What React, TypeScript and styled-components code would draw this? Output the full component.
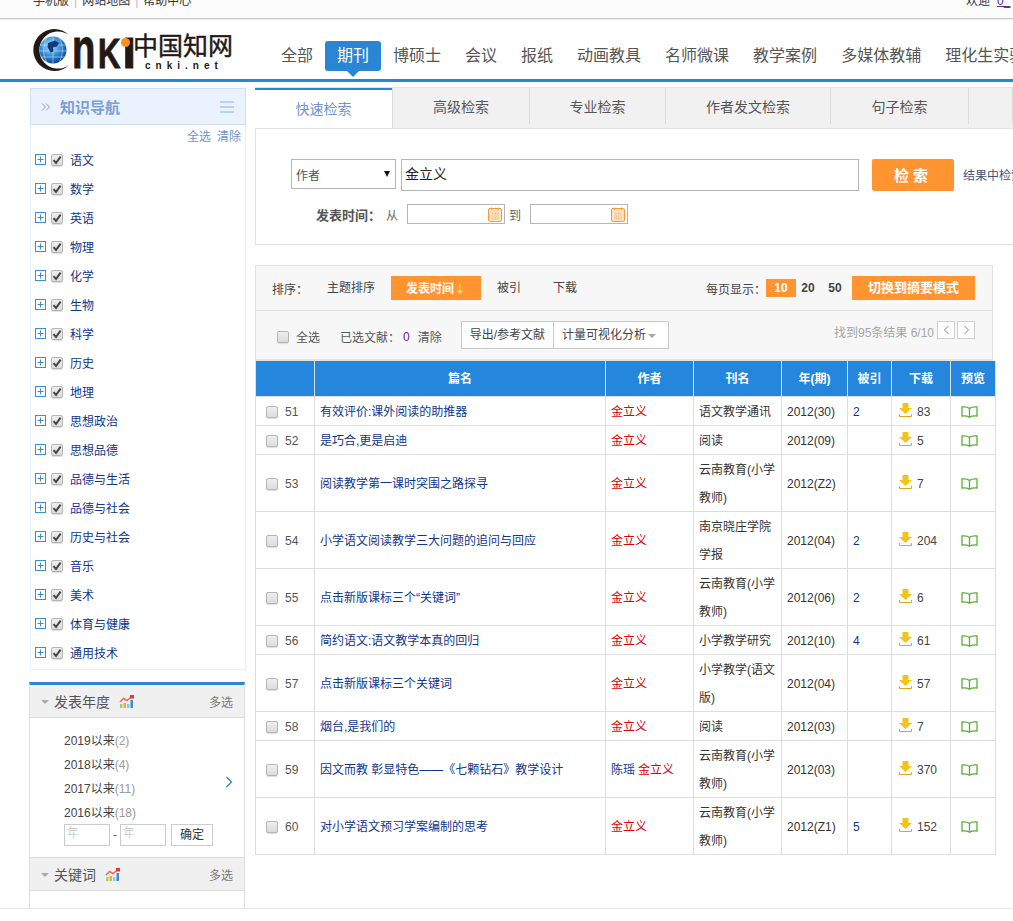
import React from "react";
import styled, { createGlobalStyle } from "styled-components";

const FONT = `"Liberation Sans", "Noto Sans CJK SC", sans-serif`;

const subjects = [
  "语文", "数学", "英语", "物理", "化学", "生物", "科学", "历史", "地理", "思想政治",
  "思想品德", "品德与生活", "品德与社会", "历史与社会", "音乐", "美术", "体育与健康", "通用技术",
];
const navItems = ["全部", "期刊", "博硕士", "会议", "报纸", "动画教具", "名师微课", "教学案例", "多媒体教辅", "理化生实验"];
const tabs = [
  { label: "快速检索", width: 138 },
  { label: "高级检索", width: 137 },
  { label: "专业检索", width: 136 },
  { label: "作者发文检索", width: 165 },
  { label: "句子检索", width: 138 },
  { label: "", width: 44 },
];
const years = [
  { y: "2019以来", n: "(2)" },
  { y: "2018以来", n: "(4)" },
  { y: "2017以来", n: "(11)" },
  { y: "2016以来", n: "(18)" },
];
const rows = [
  { no: 51, title: "有效评价:课外阅读的助推器", journal: "语文教学通讯", date: "2012(30)", cite: "2", dl: "83" },
  { no: 52, title: "是巧合,更是启迪", journal: "阅读", date: "2012(09)", cite: "", dl: "5" },
  { no: 53, title: "阅读教学第一课时突围之路探寻", journal: "云南教育(小学教师)", date: "2012(Z2)", cite: "", dl: "7" },
  { no: 54, title: "小学语文阅读教学三大问题的追问与回应", journal: "南京晓庄学院学报", date: "2012(04)", cite: "2", dl: "204" },
  { no: 55, title: "点击新版课标三个“关键词”", journal: "云南教育(小学教师)", date: "2012(06)", cite: "2", dl: "6" },
  { no: 56, title: "简约语文:语文教学本真的回归", journal: "小学教学研究", date: "2012(10)", cite: "4", dl: "61" },
  { no: 57, title: "点击新版课标三个关键词", journal: "小学教学(语文版)", date: "2012(04)", cite: "", dl: "57" },
  { no: 58, title: "烟台,是我们的", journal: "阅读", date: "2012(03)", cite: "", dl: "7" },
  { no: 59, title: "因文而教 彰显特色——《七颗钻石》教学设计", journal: "云南教育(小学教师)", date: "2012(03)", cite: "", dl: "370", co: "陈瑶" },
  { no: 60, title: "对小学语文预习学案编制的思考", journal: "云南教育(小学教师)", date: "2012(Z1)", cite: "5", dl: "152" },
];

const GlobalStyle = createGlobalStyle`
  html, body {
    margin: 0;
    padding: 0;
    background: #fff;
    overflow: hidden;
  }
  body {
    font-family: ${FONT};
    font-size: 12px;
    color: #333;
  }
`;

const Page = styled.div`
  width: 1013px;
  height: 921px;
  overflow: hidden;
`;

const TopBar = styled.div`
  height: 18px;
  background: #fcfcfc;
  border-bottom: 1px solid #c8c8c8;
  box-shadow: 0 1px 1px #eee;
  display: flex;
  justify-content: space-between;
  padding: 0 0 0 33px;
  overflow: hidden;
`;

const TopLinks = styled.div`
  margin-top: -8px;
  line-height: 18px;
  color: #333;
  display: flex;
  gap: 5px;
`;

const TopSep = styled.span`
  color: #bbb;
`;

const Welcome = styled.div`
  margin-top: -8px;
  line-height: 18px;
  width: 47px;
  white-space: nowrap;
  overflow: hidden;
  color: #333;
  em {
    font-style: normal;
    color: #5a2a86;
    margin-left: 7px;
    text-decoration: underline;
  }
`;

const Header = styled.header`
  height: 60px;
  border-bottom: 3px solid #2a85d4;
  display: flex;
  padding-left: 33px;
  overflow: hidden;
`;

const Logo = styled.div`
  position: relative;
  width: 200px;
  height: 46px;
  margin-top: 9px;
  margin-right: 36px;
  display: flex;
  flex: none;
`;

const LogoMark = styled.svg`
  width: 38px;
  height: 46px;
  flex: none;
`;

const LogoWord = styled.div`
  display: flex;
  align-items: baseline;
  width: 62px;
  flex: none;
  margin-top: 5px;
  padding-left: 1px;
  box-sizing: border-box;
  height: 36px;
`;

const LogoLetter = styled.span<{ $size: number; $scale: number; $w: number }>`
  display: block;
  flex: none;
  width: ${(p) => p.$w}px;
  font-family: "Liberation Sans", sans-serif;
  font-weight: 700;
  font-size: ${(p) => p.$size}px;
  line-height: 30px;
  color: #231815;
  -webkit-text-stroke: 1px #231815;
  transform: scaleX(${(p) => p.$scale});
  transform-origin: left center;
`;

const LogoDot = styled.span`
  position: absolute;
  left: 88px;
  top: 10px;
  width: 9px;
  height: 9px;
  border-radius: 50%;
  background: #f7941d;
`;

const LogoSide = styled.div`
  display: flex;
  flex-direction: column;
  align-items: flex-start;
`;

const LogoCn = styled.div`
  font-family: "Noto Sans CJK SC", sans-serif;
  font-weight: 400;
  font-size: 25px;
  line-height: 33px;
  color: #231815;
  -webkit-text-stroke: 0.4px #231815;
  white-space: nowrap;
`;

const LogoNet = styled.div`
  font-family: "Liberation Sans", sans-serif;
  font-size: 10px;
  line-height: 9px;
  letter-spacing: 5px;
  margin-left: 12px;
  color: #231815;
  font-weight: 700;
  white-space: nowrap;
`;

const Nav = styled.nav`
  display: flex;
  align-items: flex-start;
  margin-top: 22px;
  white-space: nowrap;
`;

const NavItem = styled.a<{ $active?: boolean }>`
  position: relative;
  height: 30px;
  line-height: 30px;
  padding: 0 12px;
  font-size: 16px;
  color: ${(p) => (p.$active ? "#fff" : "#555")};
  background: ${(p) => (p.$active ? "#2a85d4" : "transparent")};
  border-radius: 3px;
  &::after {
    content: "";
    display: ${(p) => (p.$active ? "block" : "none")};
    position: absolute;
    left: 50%;
    bottom: -6px;
    margin-left: -6px;
    border-left: 6px solid transparent;
    border-right: 6px solid transparent;
    border-top: 6px solid #2a85d4;
  }
`;

const Body = styled.div`
  display: flex;
  align-items: flex-start;
  padding: 6px 0 0 30px;
`;

const Sidebar = styled.aside`
  width: 216px;
  flex: none;
  margin-right: 9px;
`;

const NavPanel = styled.div`
  border: 1px solid #e8f0fa;
  border-top: none;
  height: 581px;
`;

const NavHead = styled.div`
  margin: 0 -1px;
  background: #eaf2fd;
  border: 1px solid #cfe0f5;
  box-sizing: border-box;
  height: 37px;
  display: flex;
  align-items: center;
  padding: 0 11px 0 10px;
`;

const NavTitle = styled.h2`
  margin: 0 0 0 9px;
  flex: 1;
  font-size: 15px;
  font-weight: 700;
  color: #7a9fd8;
`;

const SelectLinks = styled.div`
  display: flex;
  justify-content: flex-end;
  gap: 6px;
  padding: 5px 4px 0 0;
  line-height: 14px;
  color: #6f93c8;
`;

const SubjectList = styled.ul`
  list-style: none;
  margin: 1px 0 0;
  padding: 0;
`;

const SubjectRow = styled.li`
  height: 29px;
  display: flex;
  align-items: center;
  padding-left: 4px;
  color: #10358c;
`;

const PlusBox = styled.svg`
  width: 11px;
  height: 11px;
  margin-right: 5px;
  flex: none;
`;

const Check = styled.span`
  display: inline-flex;
  align-items: center;
  justify-content: center;
  flex: none;
  box-sizing: border-box;
  width: 12px;
  height: 12px;
  background: linear-gradient(#eee, #dcdcdc);
  border: 1px solid #b5b5b5;
  border-radius: 2px;
  box-shadow: 0 1px 1px #ddd;
`;

const SubjectName = styled.span`
  margin-left: 7px;
`;

const Facet = styled.section`
  margin: 12px 1px 0 -1px;
  border-top: 3px solid #2a85d4;
  border-left: 1px solid #ddd;
  border-right: 1px solid #ddd;
`;

const FacetHead = styled.div`
  height: 32px;
  background: #f0f0f0;
  border-bottom: 1px solid #ddd;
  display: flex;
  align-items: center;
  padding: 0 11px;
  color: #555;
  font-size: 14px;
`;

const FacetArrow = styled.span`
  width: 0;
  height: 0;
  border-left: 4px solid transparent;
  border-right: 4px solid transparent;
  border-top: 4px solid #aaa;
  margin-right: 5px;
  margin-top: 2px;
`;

const FacetTitle = styled.span`
  margin-right: 9px;
`;

const Spacer = styled.span`
  flex: 1;
`;

const Multi = styled.span`
  font-size: 12px;
  color: #777;
`;

const FacetBody = styled.div`
  height: 140px;
  box-sizing: border-box;
  padding: 11px 11px 0 34px;
  border-bottom: 1px solid #ddd;
  position: relative;
`;

const YearRow = styled.div`
  height: 24px;
  line-height: 24px;
  color: #444;
  span {
    color: #999;
  }
`;

const RangeRow = styled.div`
  display: flex;
  align-items: center;
  margin-top: -1px;
  color: #555;
`;

const YearInput = styled.div`
  width: 46px;
  height: 22px;
  box-sizing: border-box;
  border: 1px solid #ccc;
  color: #ccc;
  line-height: 16px;
  padding-left: 2px;
  background: #fff;
`;

const Dash = styled.span`
  width: 10px;
  text-align: center;
`;

const Confirm = styled.div`
  width: 42px;
  height: 22px;
  box-sizing: border-box;
  margin-left: 5px;
  border: 1px solid #ccc;
  text-align: center;
  line-height: 20px;
  color: #333;
`;

const NextYears = styled.svg`
  position: absolute;
  right: 11px;
  top: 58px;
  width: 8px;
  height: 12px;
`;

const KeywordBody = styled.div`
  height: 17px;
`;

const Main = styled.main`
  width: 758px;
  flex: none;
  margin-top: -1px;
`;

const TabBar = styled.div`
  display: flex;
  height: 42px;
  box-sizing: border-box;
  background: #f1f1f1;
  border-top: 1px solid #e2e2e2;
  border-bottom: 1px solid #e2e2e2;
`;

const Tab = styled.div<{ $active?: boolean; $w: number }>`
  flex: none;
  width: ${(p) => p.$w}px;
  box-sizing: border-box;
  text-align: center;
  font-size: 14px;
  color: ${(p) => (p.$active ? "#6f93d6" : "#555")};
  background: ${(p) => (p.$active ? "#fff" : "transparent")};
  border-right: 1px solid #ddd;
  line-height: ${(p) => (p.$active ? "42px" : "38px")};
  height: ${(p) => (p.$active ? "40px" : "36px")};
  box-shadow: ${(p) => (p.$active ? "inset 0 2px 0 #2a85d4" : "none")};
`;

const SearchPanel = styled.section`
  height: 116px;
  box-sizing: border-box;
  border-left: 1px solid #e2e2e2;
  border-bottom: 1px solid #e2e2e2;
  padding: 30px 0 0 35px;
  overflow: hidden;
`;

const SearchRow = styled.div`
  display: flex;
  align-items: flex-start;
  height: 32px;
  white-space: nowrap;
`;

const FieldSelect = styled.div`
  flex: none;
  width: 105px;
  height: 30px;
  box-sizing: border-box;
  border: 1px solid #b5b5b5;
  display: flex;
  align-items: center;
  justify-content: space-between;
  padding: 0 5px 0 4px;
  color: #555;
`;

const SelectCaret = styled.span`
  width: 0;
  height: 0;
  border-left: 3px solid transparent;
  border-right: 3px solid transparent;
  border-top: 6px solid #111;
`;

const Query = styled.div`
  flex: none;
  width: 458px;
  height: 32px;
  box-sizing: border-box;
  margin-left: 5px;
  border: 1px solid #b5b5b5;
  padding-left: 3px;
  line-height: 29px;
  font-size: 14px;
  color: #222;
`;

const SearchButton = styled.div`
  flex: none;
  width: 82px;
  height: 32px;
  margin-left: 13px;
  background: #ff9431;
  border-radius: 2px;
  color: #fff;
  font-weight: 700;
  font-size: 15px;
  text-align: center;
  line-height: 33px;
  letter-spacing: 4px;
`;

const InResult = styled.span`
  flex: none;
  margin-left: 9px;
  line-height: 34px;
  color: #44557a;
`;

const DateRow = styled.div`
  display: flex;
  align-items: center;
  margin: 13px 0 0 25px;
  height: 20px;
  color: #666;
`;

const DateLabel = styled.b`
  color: #555;
  font-size: 13px;
  margin-right: 5px;
`;

const DateWord = styled.span<{ $gap: number }>`
  margin-right: ${(p) => p.$gap}px;
`;

const DateInput = styled.div`
  width: 98px;
  height: 20px;
  box-sizing: border-box;
  border: 1px solid #b5b5b5;
  display: flex;
  justify-content: flex-end;
  align-items: center;
  padding-right: 2px;
  margin-right: 4px;
`;

const Calendar = styled.svg`
  width: 14px;
  height: 15px;
`;

const SortPanel = styled.section`
  margin-top: 20px;
  width: 738px;
  height: 96px;
  box-sizing: border-box;
  background: #f7f7f7;
  border: 1px solid #e2e2e2;
  border-bottom-width: 2px;
`;

const SortRow = styled.div`
  height: 45px;
  box-sizing: border-box;
  display: flex;
  align-items: center;
  border-bottom: 1px solid #e2e2e2;
  padding: 0 17px 0 16px;
  color: #444;
`;

const SortLabel = styled.span`
  margin-right: 19px;
`;

const SortItem = styled.span<{ $active?: boolean; $gap: number }>`
  flex: none;
  width: ${(p) => (p.$active ? "90px" : "auto")};
  height: 24px;
  line-height: 24px;
  text-align: center;
  margin-right: ${(p) => p.$gap}px;
  color: ${(p) => (p.$active ? "#fff" : "#444")};
  background: ${(p) => (p.$active ? "#ff9431" : "transparent")};
  font-weight: ${(p) => (p.$active ? 700 : 400)};
`;

const SortArrow = styled.span`
  display: inline-block;
  width: 12px;
  font-family: "Noto Sans CJK SC", sans-serif;
  font-weight: 400;
  color: #ffe6a8;
`;

const PageSize = styled.span<{ $active?: boolean }>`
  flex: none;
  width: ${(p) => (p.$active ? "30px" : "24px")};
  height: 18px;
  margin-right: ${(p) => (p.$active ? "0" : "3px")};
  text-align: center;
  line-height: 18px;
  font-weight: 700;
  color: ${(p) => (p.$active ? "#fff" : "#444")};
  background: ${(p) => (p.$active ? "#ff9431" : "transparent")};
`;

const ModeButton = styled.span`
  flex: none;
  width: 123px;
  height: 24px;
  margin-left: 2px;
  line-height: 24px;
  text-align: center;
  font-size: 13px;
  font-weight: 700;
  color: #fff;
  background: #ff9431;
`;

const ToolRow = styled.div`
  height: 48px;
  display: flex;
  align-items: center;
  padding: 0 17px 0 21px;
  color: #555;
`;

const ToolCheck = styled(Check)`
  margin-top: 4px;
`;

const ToolText = styled.span`
  margin-top: 3px;
  flex: none;
`;

const SelectAll = styled(ToolText)`
  margin-left: 7px;
  margin-right: 20px;
`;

const Zero = styled(ToolText)`
  color: #5a2a86;
  margin-left: 3px;
  margin-right: 8px;
`;

const ButtonGroup = styled.div`
  display: flex;
  flex: none;
  height: 28px;
  margin-left: 19px;
  box-sizing: border-box;
  border: 1px solid #c8c8c8;
  background: #fff;
  line-height: 26px;
  color: #444;
`;

const GroupButton = styled.span`
  padding: 0 8px;
  & + & {
    border-left: 1px solid #c8c8c8;
  }
`;

const GroupCaret = styled.i`
  display: inline-block;
  border-left: 4px solid transparent;
  border-right: 4px solid transparent;
  border-top: 4px solid #aaa;
  margin: 0 4px 0 2px;
  vertical-align: 1px;
`;

const Found = styled.span`
  color: #a5a5a5;
  margin-right: 3px;
  margin-top: -8px;
`;

const PageButton = styled.span`
  width: 18px;
  height: 18px;
  box-sizing: border-box;
  margin-top: -11px;
  border: 1px solid #d0d0d0;
  background: #fff;
  display: flex;
  align-items: center;
  justify-content: center;
  & + & {
    margin-left: 2px;
  }
`;

const Grid = styled.table`
  width: 740px;
  table-layout: fixed;
  border-collapse: collapse;
  line-height: 28px;
`;

const HeadCell = styled.th`
  height: 35px;
  padding: 0;
  background: #2486dc;
  color: #fff;
  font-size: 12px;
  text-align: center;
  border: 1px solid #d9e2ea;
  border-top: none;
`;

const Cell = styled.td`
  padding: 0 5px;
  border: 1px solid #ddd;
  height: 28px;
  color: #333;
  vertical-align: middle;
  text-align: left;
`;

const CellBody = styled.div`
  margin: 1px 0 -1px;
`;

const NoCell = styled(CellBody)`
  display: flex;
  align-items: center;
  padding-left: 5px;
  color: #555;
`;

const RowNo = styled.span`
  margin-left: 7px;
`;

const TitleLink = styled.a`
  color: #10358c;
`;

const Author = styled.a`
  color: #e00000;
`;

const CoAuthor = styled.a`
  color: #10358c;
  margin-right: 3px;
`;

const CiteNum = styled.span`
  color: #10358c;
`;

const DlCell = styled(CellBody)`
  display: flex;
  align-items: center;
  padding-left: 2px;
  color: #444;
`;

const DlIcon = styled.svg`
  width: 13px;
  height: 14px;
  margin-right: 5px;
  margin-top: -5px;
  flex: none;
`;

const Book = styled.svg`
  display: block;
  width: 17px;
  height: 12px;
  margin: 1px 0 -1px 5px;
`;

const ChartIcon = styled.svg`
  width: 15px;
  height: 13px;
`;

const BottomRule = styled.div`
  height: 1px;
  background: #e5e5e5;
  position: fixed;
  left: 0;
  right: 0;
  top: 908px;
`;

function CheckTick() {
  return (
    <svg width="10" height="10" viewBox="0 0 10 10">
      <path d="M1.500 5.200 4 8 8.600 1.600" fill="none" stroke="#444" strokeWidth="2" />
    </svg>
  );
}

function Trend() {
  return (
    <ChartIcon viewBox="0 0 15 13">
      <rect x="1" y="9" width="2.500" height="4" fill="#9ad56a" />
      <rect x="4.500" y="8" width="2.500" height="5" fill="#f5a742" />
      <rect x="8" y="9" width="2.500" height="4" fill="#7fd0ea" />
      <rect x="11.500" y="5" width="2.500" height="8" fill="#3a8fd9" />
      <path d="M1 7 4.500 3.500 8 5.500 13 1.500" fill="none" stroke="#ee6a5c" strokeWidth="1.500" />
      <rect x="11" y="0" width="4" height="3.500" fill="#e5392d" />
    </ChartIcon>
  );
}

function DateIcon() {
  return (
    <Calendar viewBox="0 0 14 15">
      <rect x="0.500" y="1.500" width="13" height="13" rx="1.500" fill="#fde3c4" stroke="#f59a3e" />
      <path d="M3.500 0.500v2.500M10.500 0.500v2.500" stroke="#f59a3e" />
      <path d="M3 6.500h8M3 9h8M3 11.500h8M5 5v8M7.500 5v8M10 5v8" stroke="#f8c08a" strokeWidth="0.700" />
    </Calendar>
  );
}

export default function App() {
  return (
    <Page>
      <GlobalStyle />
      <TopBar>
        <TopLinks>
          手机版 <TopSep>|</TopSep> 网站地图 <TopSep>|</TopSep> 帮助中心
        </TopLinks>
        <Welcome>
          欢迎<em>0_</em>
        </Welcome>
      </TopBar>
      <Header>
        <Logo>
          <LogoMark viewBox="0 0 38 46">
            <defs>
              <radialGradient id="globe" cx="0.42" cy="0.35" r="0.7">
                <stop offset="0" stopColor="#b4e2f8" />
                <stop offset="0.55" stopColor="#2f8ad6" />
                <stop offset="1" stopColor="#0d3a8a" />
              </radialGradient>
            </defs>
            <path d="M36 7A21 21 0 1 0 36 37A18.600 18.600 0 1 1 36 7Z" fill="#231815" />
            <circle cx="20" cy="22" r="13.500" fill="url(#globe)" />
            <path d="M7 17h26M6.500 23h27M8.500 29h23M20 8.500v27M13.500 10q-6 12 0 24M26.500 10q6 12 0 24" stroke="#d8effc" strokeWidth="0.500" fill="none" />
            <path d="M15 15l7-2.500 4 2.500-2 3.500-4 1 .5 4-3 1-3-5.500z" fill="#123a7d" />
          </LogoMark>
          <LogoWord>
            <LogoLetter $size={58} $scale={0.66} $w={26}>n</LogoLetter>
            <LogoLetter $size={42} $scale={0.74} $w={24}>K</LogoLetter>
            <LogoLetter $size={58} $scale={0.9} $w={10}>ı</LogoLetter>
          </LogoWord>
          <LogoDot />
          <LogoSide>
            <LogoCn>中国知网</LogoCn>
            <LogoNet>cnki.net</LogoNet>
          </LogoSide>
        </Logo>
        <Nav>
          {navItems.map((n) => (
            <NavItem key={n} $active={n === "期刊"}>
              {n}
            </NavItem>
          ))}
        </Nav>
      </Header>

      <Body>
        <Sidebar>
          <NavPanel>
            <NavHead>
              <svg width="10" height="10" viewBox="0 0 10 10">
                <path d="M1 1.500 4.500 5 1 8.500M5 1.500 8.500 5 5 8.500" fill="none" stroke="#999" />
              </svg>
              <NavTitle>知识导航</NavTitle>
              <svg width="14" height="12" viewBox="0 0 14 12">
                <path d="M0 1h14M0 6h14M0 11h14" stroke="#a9c8f0" strokeWidth="1.500" />
              </svg>
            </NavHead>
            <SelectLinks>
              <span>全选</span>
              <span>清除</span>
            </SelectLinks>
            <SubjectList>
              {subjects.map((s) => (
                <SubjectRow key={s}>
                  <PlusBox viewBox="0 0 11 11">
                    <rect x="0.500" y="0.500" width="10" height="10" fill="#fff" stroke="#3a8fd0" />
                    <path d="M2.500 5.500h6M5.500 2.500v6" stroke="#3a8fd0" />
                  </PlusBox>
                  <Check>
                    <CheckTick />
                  </Check>
                  <SubjectName>{s}</SubjectName>
                </SubjectRow>
              ))}
            </SubjectList>
          </NavPanel>

          <Facet>
            <FacetHead>
              <FacetArrow />
              <FacetTitle>发表年度</FacetTitle>
              <Trend />
              <Spacer />
              <Multi>多选</Multi>
            </FacetHead>
            <FacetBody>
              {years.map((r) => (
                <YearRow key={r.y}>
                  {r.y}
                  <span>{r.n}</span>
                </YearRow>
              ))}
              <RangeRow>
                <YearInput>年</YearInput>
                <Dash>-</Dash>
                <YearInput>年</YearInput>
                <Confirm>确定</Confirm>
              </RangeRow>
              <NextYears viewBox="0 0 8 12">
                <path d="M1.500 1 6.500 6 1.500 11" fill="none" stroke="#2a85d4" strokeWidth="1.300" />
              </NextYears>
            </FacetBody>
            <FacetHead>
              <FacetArrow />
              <FacetTitle>关键词</FacetTitle>
              <Trend />
              <Spacer />
              <Multi>多选</Multi>
            </FacetHead>
            <KeywordBody />
          </Facet>
        </Sidebar>

        <Main>
          <TabBar>
            {tabs.map((t, i) => (
              <Tab key={i} $w={t.width} $active={i === 0}>
                {t.label}
              </Tab>
            ))}
          </TabBar>
          <SearchPanel>
            <SearchRow>
              <FieldSelect>
                作者
                <SelectCaret />
              </FieldSelect>
              <Query>金立义</Query>
              <SearchButton>检索</SearchButton>
              <InResult>结果中检索</InResult>
            </SearchRow>
            <DateRow>
              <DateLabel>发表时间：</DateLabel>
              <DateWord $gap={9}>从</DateWord>
              <DateInput>
                <DateIcon />
              </DateInput>
              <DateWord $gap={9}>到</DateWord>
              <DateInput>
                <DateIcon />
              </DateInput>
            </DateRow>
          </SearchPanel>

          <SortPanel>
            <SortRow>
              <SortLabel>排序：</SortLabel>
              <SortItem $gap={16}>主题排序</SortItem>
              <SortItem $active $gap={16}>
                发表时间<SortArrow>↓</SortArrow>
              </SortItem>
              <SortItem $gap={32}>被引</SortItem>
              <SortItem $gap={0}>下载</SortItem>
              <Spacer />
              <span>每页显示：</span>
              <PageSize $active>10</PageSize>
              <PageSize>20</PageSize>
              <PageSize>50</PageSize>
              <ModeButton>切换到摘要模式</ModeButton>
            </SortRow>
            <ToolRow>
              <ToolCheck />
              <SelectAll>全选</SelectAll>
              <ToolText>已选文献：</ToolText>
              <Zero>0</Zero>
              <ToolText>清除</ToolText>
              <ButtonGroup>
                <GroupButton>导出/参考文献</GroupButton>
                <GroupButton>
                  计量可视化分析
                  <GroupCaret />
                </GroupButton>
              </ButtonGroup>
              <Spacer />
              <Found>找到95条结果 6/10</Found>
              <PageButton>
                <svg width="7" height="10" viewBox="0 0 7 10">
                  <path d="M5.500 1 1.500 5l4 4" fill="none" stroke="#888" />
                </svg>
              </PageButton>
              <PageButton>
                <svg width="7" height="10" viewBox="0 0 7 10">
                  <path d="M1.500 1l4 4-4 4" fill="none" stroke="#888" />
                </svg>
              </PageButton>
            </ToolRow>
          </SortPanel>

          <Grid>
            <colgroup>
              <col width="59" />
              <col width="291" />
              <col width="88" />
              <col width="88" />
              <col width="66" />
              <col width="44" />
              <col width="59" />
              <col width="45" />
            </colgroup>
            <thead>
              <tr>
                <HeadCell />
                <HeadCell>篇名</HeadCell>
                <HeadCell>作者</HeadCell>
                <HeadCell>刊名</HeadCell>
                <HeadCell>年(期)</HeadCell>
                <HeadCell>被引</HeadCell>
                <HeadCell>下载</HeadCell>
                <HeadCell>预览</HeadCell>
              </tr>
            </thead>
            <tbody>
              {rows.map((r) => (
                <tr key={r.no}>
                  <Cell>
                    <NoCell>
                      <Check />
                      <RowNo>{r.no}</RowNo>
                    </NoCell>
                  </Cell>
                  <Cell>
                    <CellBody>
                      <TitleLink>{r.title}</TitleLink>
                    </CellBody>
                  </Cell>
                  <Cell>
                    <CellBody>
                      {r.co && <CoAuthor>{r.co}</CoAuthor>}
                      <Author>金立义</Author>
                    </CellBody>
                  </Cell>
                  <Cell>
                    <CellBody>{r.journal}</CellBody>
                  </Cell>
                  <Cell>
                    <CellBody>{r.date}</CellBody>
                  </Cell>
                  <Cell>
                    <CellBody>
                      <CiteNum>{r.cite}</CiteNum>
                    </CellBody>
                  </Cell>
                  <Cell>
                    <DlCell>
                      <DlIcon viewBox="0 0 13 14">
                        <path d="M3.500 0h6v5H13L6.500 11 0 5h3.500z" fill="#f0c419" />
                        <path d="M0.500 11v2.500h12V11" fill="none" stroke="#e3a520" />
                      </DlIcon>
                      {r.dl}
                    </DlCell>
                  </Cell>
                  <Cell>
                    <Book viewBox="0 0 17 12">
                      <path d="M8.500 2.500C7 1 4 .8 1 1v9c3-.2 5.500 0 7.500 1.200C10.500 10 13 9.800 16 10V1c-3-.2-6 0-7.500 1.500zM8.500 2.500v8.500" fill="none" stroke="#5cae3a" strokeWidth="1.300" />
                    </Book>
                  </Cell>
                </tr>
              ))}
            </tbody>
          </Grid>
        </Main>
      </Body>
      <BottomRule />
    </Page>
  );
}
